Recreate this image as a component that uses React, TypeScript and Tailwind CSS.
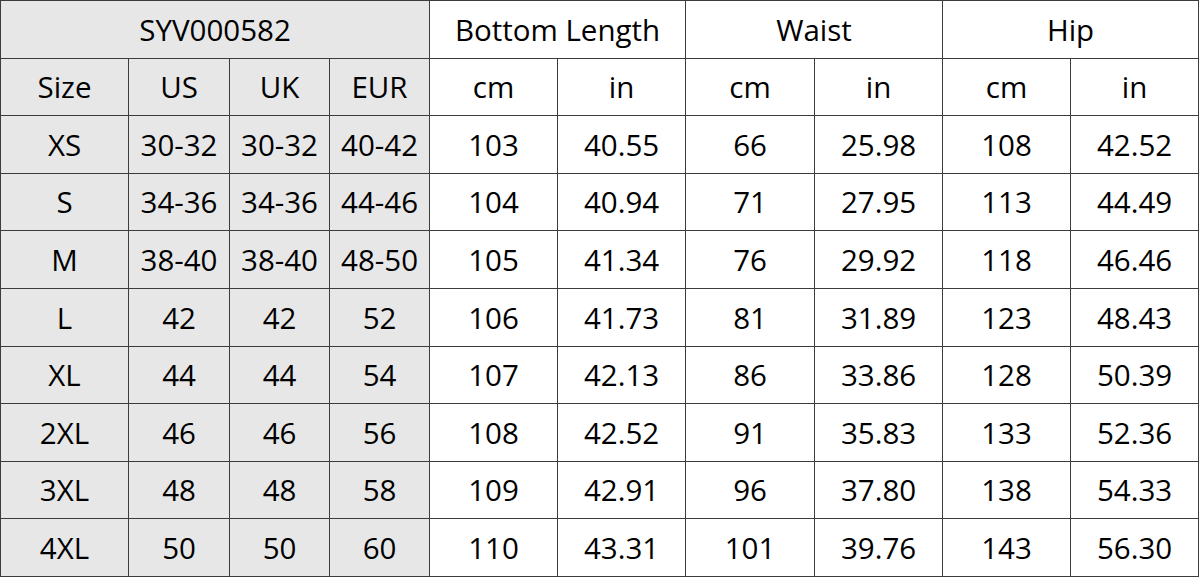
import React from 'react';

const rows: string[][] = [
  ['XS', '30-32', '30-32', '40-42', '103', '40.55', '66', '25.98', '108', '42.52'],
  ['S', '34-36', '34-36', '44-46', '104', '40.94', '71', '27.95', '113', '44.49'],
  ['M', '38-40', '38-40', '48-50', '105', '41.34', '76', '29.92', '118', '46.46'],
  ['L', '42', '42', '52', '106', '41.73', '81', '31.89', '123', '48.43'],
  ['XL', '44', '44', '54', '107', '42.13', '86', '33.86', '128', '50.39'],
  ['2XL', '46', '46', '56', '108', '42.52', '91', '35.83', '133', '52.36'],
  ['3XL', '48', '48', '58', '109', '42.91', '96', '37.80', '138', '54.33'],
  ['4XL', '50', '50', '60', '110', '43.31', '101', '39.76', '143', '56.30'],
];

const widths = [128, 101, 100, 100, 128, 128, 129, 128, 128, 128];

const cell = 'border border-[#3c3c3c] text-center align-middle p-0 leading-none';
const grey = 'bg-[#e7e7e7]';

const App: React.FC = () => {
  return (
    <div className="w-[1200px] h-[578px] bg-white text-black" style={{ fontFamily: '"Open Sans", "Noto Sans", sans-serif' }}>
      <table className="table-fixed border-collapse w-[1199px] text-[29.5px]">
        <colgroup>
          {widths.map((w, i) => (
            <col key={i} style={{ width: w }} />
          ))}
        </colgroup>
        <tbody>
          <tr className="h-[57.6px]">
            <td colSpan={4} className={`${cell} ${grey}`}>SYV000582</td>
            <td colSpan={2} className={cell}>Bottom Length</td>
            <td colSpan={2} className={cell}>Waist</td>
            <td colSpan={2} className={cell}>Hip</td>
          </tr>
          <tr className="h-[57.6px]">
            {['Size', 'US', 'UK', 'EUR'].map((t) => (
              <td key={t} className={`${cell} ${grey}`}>{t}</td>
            ))}
            {['cm', 'in', 'cm', 'in', 'cm', 'in'].map((t, i) => (
              <td key={i} className={cell}>{t}</td>
            ))}
          </tr>
          {rows.map((r) => (
            <tr key={r[0]} className="h-[57.6px]">
              {r.map((v, i) => (
                <td key={i} className={`${cell} ${i < 4 ? grey : ''}`}>{v}</td>
              ))}
            </tr>
          ))}
        </tbody>
      </table>
    </div>
  );
};

export default App;
